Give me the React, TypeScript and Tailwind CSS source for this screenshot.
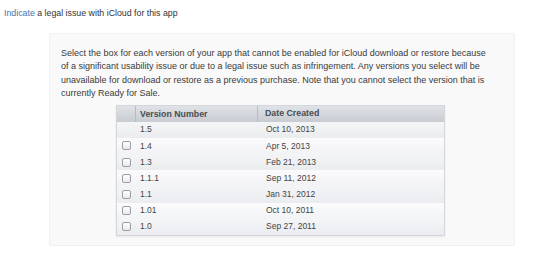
const versions = [
  { v: "1.5", date: "Oct 10, 2013", box: false },
  { v: "1.4", date: "Apr 5, 2013", box: true },
  { v: "1.3", date: "Feb 21, 2013", box: true },
  { v: "1.1.1", date: "Sep 11, 2012", box: true },
  { v: "1.1", date: "Jan 31, 2012", box: true },
  { v: "1.01", date: "Oct 10, 2011", box: true },
  { v: "1.0", date: "Sep 27, 2011", box: true },
];

export default function App() {
  return (
    <div className="h-[261px] w-[540px] bg-white font-['Liberation_Sans',Arial,sans-serif] text-[#333]">
      <div className="whitespace-nowrap px-[4px] pt-[7px] text-[8.8px] leading-[13px]">
        <span className="text-[#3b78ad]">Indicate</span> a legal issue with iCloud for this app
      </div>

      <div className="ml-[49px] mt-[13px] h-[213px] w-[466px] rounded-[2px] border border-[#f1f1f1] bg-[#f9f9f9] pl-[11px] pr-[8px] pt-[13px]">
        <p className="whitespace-nowrap text-[9px] leading-[13.4px] text-[#3a3a3a]">
          Select the box for each version of your app that cannot be enabled for iCloud download or restore because
          <br />
          of a significant usability issue or due to a legal issue such as infringement. Any versions you select will be
          <br />
          unavailable for download or restore as a previous purchase. Note that you cannot select the version that is
          <br />
          currently Ready for Sale.
        </p>

        <div className="ml-[55px] mt-[4px] w-[329px] overflow-hidden border border-[#d4d6da] shadow-[0_1px_2px_rgba(0,0,0,0.08)]">
          <div className="flex h-[16px] items-center bg-gradient-to-b from-[#dfe2e6] to-[#c8ccd2] text-[8.8px] font-bold text-[#4a4d52]">
            <div className="h-full w-[19px] border-r border-[#b9bdc3]" />
            <div className="h-full w-[122px] border-r border-[#b9bdc3] pl-[4px] leading-[16px]">Version Number</div>
            <div className="pl-[7px]">Date Created</div>
          </div>
          {versions.map((row, i) => (
            <div
              key={row.v}
              className={`flex h-[16.2px] items-center text-[8.5px] text-[#444] ${
                i % 2 === 0
                  ? "bg-gradient-to-b from-[#f4f5f7] to-[#ebecef]"
                  : "bg-gradient-to-b from-[#fbfbfc] to-[#f2f3f5]"
              }`}
            >
              <div className="flex w-[19px] justify-center">
                {row.box && (
                  <span className="block h-[9px] w-[9px] rounded-[2px] border border-[#9a9ea4] bg-gradient-to-b from-white to-[#e8e9eb]" />
                )}
              </div>
              <div className="w-[123px] pl-[4px]">{row.v}</div>
              <div className="pl-[7px]">{row.date}</div>
            </div>
          ))}
        </div>
      </div>
    </div>
  );
}
